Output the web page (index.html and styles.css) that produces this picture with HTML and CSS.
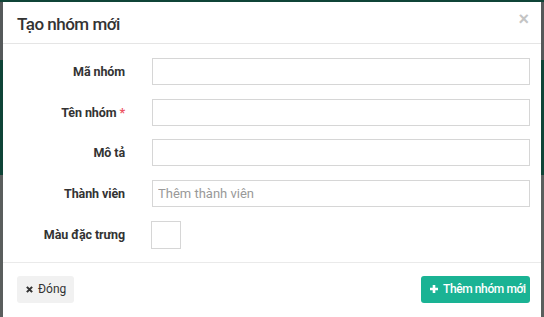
FILE: index.html
```html
<!DOCTYPE html>
<html lang="vi">
<head>
    <meta charset="UTF-8">
    <meta name="viewport" content="width=device-width, initial-scale=1.0">
    <title>Tạo nhóm mới</title>
    <link rel="stylesheet" href="styles.css">
</head>
<body>
    <div class="modal">
        <div class="modal-header">
            <h4 class="modal-title">Tạo nhóm mới</h4>
            <button type="button" class="close">&times;</button>
        </div>
        <form class="modal-body">
            <div class="form-row">
                <label for="code">Mã nhóm</label>
                <input type="text" id="code">
            </div>
            <div class="form-row">
                <label for="name">Tên nhóm <span class="required">*</span></label>
                <input type="text" id="name">
            </div>
            <div class="form-row">
                <label for="desc">Mô tả</label>
                <input type="text" id="desc">
            </div>
            <div class="form-row">
                <label for="members">Thành viên</label>
                <input type="text" id="members" placeholder="Thêm thành viên">
            </div>
            <div class="form-row last">
                <label>Màu đặc trưng</label>
                <span class="swatch"></span>
            </div>
        </form>
        <div class="modal-footer">
            <button type="button" class="btn btn-default">
                <svg width="7" height="7" viewBox="0 0 8 8"><path d="M1 1L7 7M7 1L1 7" stroke="#333" stroke-width="2.4"/></svg>
                Đóng
            </button>
            <button type="button" class="btn btn-primary">
                <svg width="8" height="8" viewBox="0 0 8 8"><path d="M4 0V8M0 4H8" stroke="#fff" stroke-width="2.6"/></svg>
                Thêm nhóm mới
            </button>
        </div>
    </div>
</body>
</html>
```

FILE: styles.css
```css
html, body {
    margin: 0;
    height: 100%;
    overflow: hidden;
}
body {
    font-family: Roboto, "Liberation Sans", sans-serif;
    color: #333;
    background: linear-gradient(to bottom, #0f4437 0 2px, #55595a 2px 60px, #0f4437 60px 175px, #5a5e5d 175px);
    padding-top: 2px;
    box-sizing: border-box;
}
.modal {
    margin-left: 3px;
    width: 538px;
    background: #fff;
    height: 330px;
}
.modal-header {
    height: 41px;
    border-bottom: 1px solid #e5e5e5;
    display: flex;
    align-items: center;
    justify-content: space-between;
    padding: 0 12px 0 14px;
}
.modal-title {
    margin: 0;
    font-size: 17px;
    font-weight: 500;
    letter-spacing: -0.5px;
    color: #333;
    position: relative;
    top: 1px;
}
.close {
    border: none;
    background: none;
    padding: 0;
    font-size: 18px;
    line-height: 1;
    color: #c4c4c4;
    font-weight: bold;
    position: relative;
    top: -4px;
    cursor: pointer;
}
.modal-body {
    padding: 14px 11px 13px 0;
    border-bottom: 1px solid #eaeaea;
}
.form-row {
    display: flex;
    align-items: center;
    margin-bottom: 13.5px;
}
.form-row.last {
    margin-bottom: 0;
    margin-top: 14px;
}
.form-row label {
    width: 122px;
    text-align: right;
    font-size: 12.5px;
    font-weight: bold;
    letter-spacing: -0.1px;
    margin-right: 27px;
}
.required {
    color: #ed5565;
}
.form-row input {
    flex: 1;
    height: 27px;
    box-sizing: border-box;
    border: 1px solid #d6d6d6;
    padding: 0 5px;
    font-family: inherit;
    font-size: 13px;
    color: #333;
    outline: none;
}
.form-row input::placeholder {
    color: #999;
}
.swatch {
    display: block;
    width: 30px;
    height: 28px;
    box-sizing: border-box;
    border: 1px solid #d6d6d6;
    margin-left: -1px;
}
.modal-footer {
    display: flex;
    justify-content: space-between;
    padding: 13px 11px 0 14px;
}
.btn {
    height: 27px;
    border: none;
    border-radius: 3px;
    font-family: inherit;
    font-size: 12px;
    display: flex;
    align-items: center;
    gap: 5px;
    white-space: nowrap;
    cursor: pointer;
}
.btn svg {
    flex-shrink: 0;
}
.btn-default {
    background: #f1f1f1;
    color: #333;
    padding: 0 9px;
    width: 57px;
}
.btn-primary {
    background: #1ab394;
    color: #fff;
    font-weight: 500;
    letter-spacing: -0.4px;
    padding: 0 9px;
    width: 109px;
}
```
